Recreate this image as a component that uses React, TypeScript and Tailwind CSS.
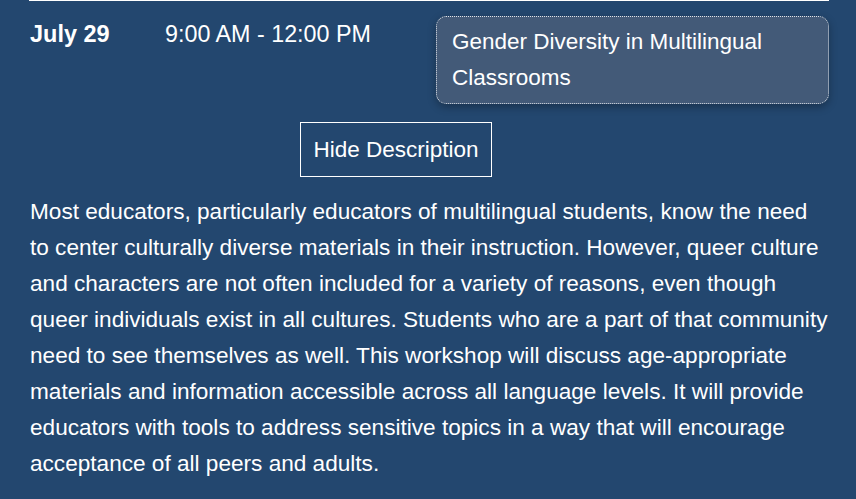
export default function App() {
  const lines = [
    "Most educators, particularly educators of multilingual students, know the need",
    "to center culturally diverse materials in their instruction. However, queer culture",
    "and characters are not often included for a variety of reasons, even though",
    "queer individuals exist in all cultures. Students who are a part of that community",
    "need to see themselves as well. This workshop will discuss age-appropriate",
    "materials and information accessible across all language levels. It will provide",
    "educators with tools to address sensitive topics in a way that will encourage",
    "acceptance of all peers and adults.",
  ];
  return (
    <div
      className="w-[856px] h-[499px] overflow-hidden bg-[#23476f] text-white"
      style={{ fontFamily: '"Liberation Sans", Arial, sans-serif' }}
    >
      <div className="ml-[29px] w-[800px] border-t border-white">
        <div className="flex items-start">
          <div className="w-[136px] pt-[15px] pl-px text-[23.5px] leading-[36px] font-bold">July 29</div>
          <div className="w-[271px] pt-[15px] text-[23.3px] leading-[36px]">9:00 AM - 12:00 PM</div>
          <div className="mt-[15px] w-[393px] rounded-[10px] border border-dotted border-[#dfe4ea] bg-[#435a78] px-[15px] py-[7px] text-[22.5px] leading-[36px] shadow-[0_3px_8px_rgba(0,0,0,0.3)]">
            Gender Diversity in Multilingual Classrooms
          </div>
        </div>
        <div className="mt-[18px] ml-[271px]">
          <button className="h-[55px] w-[192px] border border-white text-[22.5px] text-white">
            Hide Description
          </button>
        </div>
        <p className="mt-[17px] pl-px text-[22.6px] leading-[36px]">
          {lines.map((l, i) => (
            <span key={i} className="block whitespace-nowrap">
              {l}
            </span>
          ))}
        </p>
      </div>
    </div>
  );
}
